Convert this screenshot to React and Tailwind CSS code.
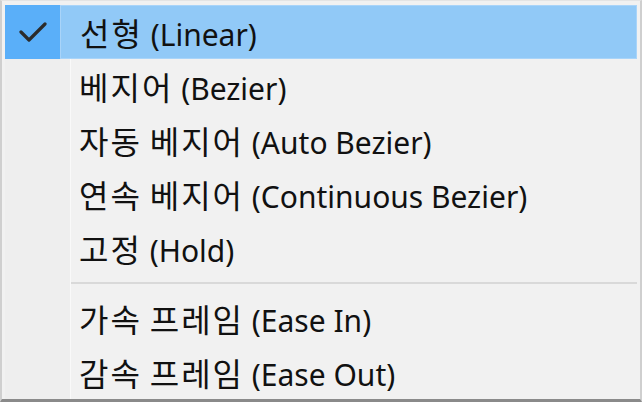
import React from "react";

const items = [
  { ko: ["선형"], en: "(Linear)", checked: true },
  { ko: ["베지어"], en: "(Bezier)" },
  { ko: ["자동", "베지어"], en: "(Auto Bezier)" },
  { ko: ["연속", "베지어"], en: "(Continuous Bezier)" },
  { ko: ["고정"], en: "(Hold)" },
  { sep: true },
  { ko: ["가속", "프레임"], en: "(Ease In)" },
  { ko: ["감속", "프레임"], en: "(Ease Out)" },
];

function Check() {
  return (
    <svg width="28" height="20" viewBox="0 0 28 20" fill="none">
      <path d="M2 10 L10 18 L26 2" stroke="#2b2b2b" strokeWidth="3.2" strokeLinecap="round" strokeLinejoin="round" />
    </svg>
  );
}

function Label({ it }) {
  return (
    <span className="whitespace-pre leading-none pt-[1px]">
      {it.ko.map((w, j) => (
        <React.Fragment key={j}>
          <span className="text-[32px] tracking-[2px] font-['Noto_Sans_CJK_KR']">{w}</span>
          {" "}
        </React.Fragment>
      ))}
      {it.en}
    </span>
  );
}

export default function App() {
  return (
    <div
      className="w-[642px] h-[402px] bg-[#f1f1f1] border-t border-l-2 border-r-2 border-b-[3px] border-t-[#e4e4e4] border-l-[#cfcfcf] border-r-[#cfcfcf] border-b-[#8a8a8a] pt-[4px] px-[3px] text-[#111] text-[30px]"
      style={{ fontFamily: '"Noto Sans", "Noto Sans CJK KR", sans-serif' }}
    >
      {items.map((it, i) =>
        it.sep ? (
          <div key={i} className="flex h-[16px]">
            <div className="w-[65px] bg-[#eeeeee]" />
            <div className="flex-1 flex items-center border-l border-[#f9f9f9]">
              <div className="h-[2px] w-full bg-[#d9d9d9]" />
            </div>
          </div>
        ) : (
          <div key={i} className="flex h-[54px]">
            <div
              className={
                it.checked
                  ? "w-[55px] flex items-center justify-center bg-[#5aaff9]"
                  : "w-[55px] bg-[#eeeeee]"
              }
            >
              {it.checked && <Check />}
            </div>
            {it.checked ? (
              <div className="flex-1 flex items-center pl-[19px] bg-[#91c9f7] border border-[#a9d4f9]">
                <Label it={it} />
              </div>
            ) : (
              <div className="flex-1 flex">
                <div className="w-[10px] bg-[#eeeeee]" />
                <div className="flex-1 flex items-center pl-[8px] border-l border-[#f9f9f9]">
                  <Label it={it} />
                </div>
              </div>
            )}
          </div>
        )
      )}
    </div>
  );
}
